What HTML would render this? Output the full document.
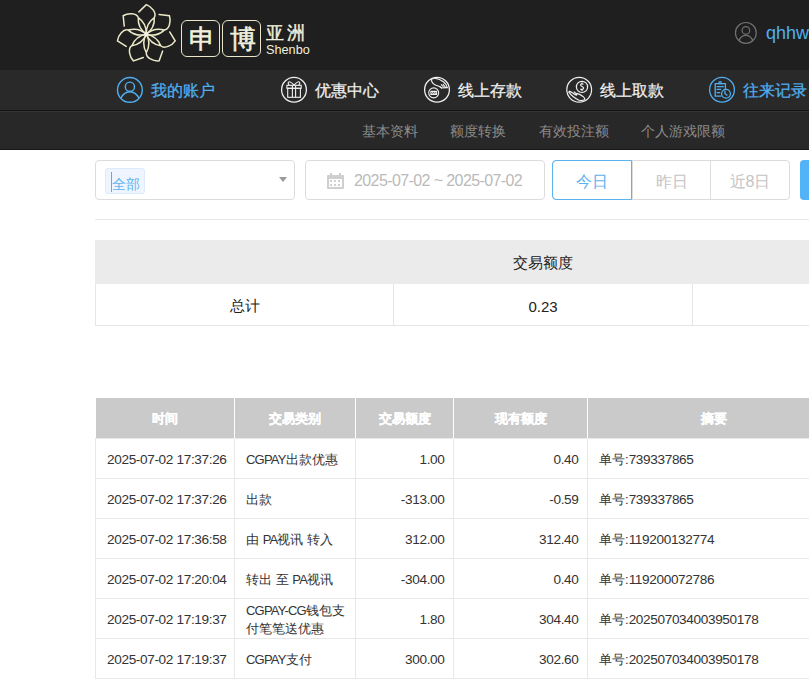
<!DOCTYPE html>
<html><head><meta charset="utf-8">
<style>
*{box-sizing:border-box;margin:0;padding:0}
html,body{width:809px;height:679px;overflow:hidden;background:#fff;font-family:"Liberation Sans",sans-serif;position:relative}
.abs{position:absolute}
#hdr{left:0;top:0;width:809px;height:70px;background:#1f1f1f}
#nav{left:0;top:70px;width:809px;height:40px;background:#292929}
#navline{left:0;top:110px;width:809px;height:1px;background:#131313;border-bottom:1px solid #353535;height:2px}
#sub{left:0;top:112px;width:809px;height:38px;background:#282828;border-bottom:1px solid #171717}
.box{border:1px solid #e9e6c9;border-radius:6px;width:39px;height:37px;top:20px;color:#f2f0dc;font-size:26px;line-height:36px;text-align:center;-webkit-text-stroke:0.6px #f2f0dc;padding-left:3px}
.nv{top:71px;height:40px;line-height:40px;font-size:16px;color:#f0f0f0;white-space:nowrap;-webkit-text-stroke:0.25px currentColor}
.blue{color:#50aff0}
.sn{top:112px;line-height:38px;font-size:14px;color:#8c8c8c;white-space:nowrap}
.inp{top:160px;height:40px;border:1px solid #dcdcdc;border-radius:4px;background:#fff}
.btn{top:0;height:38px;line-height:42px;width:79px;text-align:center;font-size:16px;color:#c4c4c4}
table{border-collapse:collapse;position:absolute}
#sum{left:95px;top:240px;width:896px}
#sum td{height:42px;padding-top:3px;border:1px solid #e6e6e6;text-align:center;font-size:15px;color:#222;width:298.6px}
#sum tr.h td{height:43px;background:#ebebeb;border:1px solid #ebebeb}
#det{left:95px;top:398px;table-layout:fixed;width:744px}
#det th{height:40px;padding-top:2px;background:#cacaca;color:#fff;font-size:13px;font-weight:bold;-webkit-text-stroke:0.3px #fff;border-left:1px solid #fff;border-right:1px solid #fff}
#det th:first-child{border-left:none}
#det td{height:40px;border:1px solid #e8e8e8;font-size:13px;color:#333;padding:3px 0 0 11px;line-height:18px;white-space:nowrap}
.n{letter-spacing:-0.35px;font-size:13.6px}
.c{letter-spacing:-0.8px}
#det td.r{text-align:right;padding-right:8.5px}
</style></head><body>
<div id="hdr" class="abs"></div>
<!-- flower logo -->
<svg class="abs" style="left:114px;top:2px" width="64" height="64" viewBox="-32.3 -32.2 64 64">
 <g fill="none" stroke="#ece9c8" stroke-width="1.5" stroke-linecap="round" stroke-linejoin="miter">
  <path d="M0 0 Q8.70 -6.08 8.02 -16.67 Q-0.67 -10.59 0 0 M8.02 -16.67 C10.6 -21 5.5 -27.6 0 -29.6 L-7.4 -22.3" transform="rotate(0.00)"/><path d="M0 0 Q8.70 -6.08 8.02 -16.67 Q-0.67 -10.59 0 0 M8.02 -16.67 C10.6 -21 5.5 -27.6 0 -29.6 L-7.4 -22.3" transform="rotate(51.43)"/><path d="M0 0 Q8.70 -6.08 8.02 -16.67 Q-0.67 -10.59 0 0 M8.02 -16.67 C10.6 -21 5.5 -27.6 0 -29.6 L-7.4 -22.3" transform="rotate(102.86)"/><path d="M0 0 Q8.70 -6.08 8.02 -16.67 Q-0.67 -10.59 0 0 M8.02 -16.67 C10.6 -21 5.5 -27.6 0 -29.6 L-7.4 -22.3" transform="rotate(154.29)"/><path d="M0 0 Q8.70 -6.08 8.02 -16.67 Q-0.67 -10.59 0 0 M8.02 -16.67 C10.6 -21 5.5 -27.6 0 -29.6 L-7.4 -22.3" transform="rotate(205.71)"/><path d="M0 0 Q8.70 -6.08 8.02 -16.67 Q-0.67 -10.59 0 0 M8.02 -16.67 C10.6 -21 5.5 -27.6 0 -29.6 L-7.4 -22.3" transform="rotate(257.14)"/><path d="M0 0 Q8.70 -6.08 8.02 -16.67 Q-0.67 -10.59 0 0 M8.02 -16.67 C10.6 -21 5.5 -27.6 0 -29.6 L-7.4 -22.3" transform="rotate(308.57)"/>
 </g>
 <circle cx="0" cy="0" r="1.8" fill="#f2f2ee"/>
</svg>
<div class="abs box" style="left:181px">申</div>
<div class="abs box" style="left:222px">博</div>
<div class="abs" style="left:266px;top:22px;font-size:18px;line-height:22px;letter-spacing:3px;color:#f2f0dc;-webkit-text-stroke:0.4px #f2f0dc">亚洲</div>
<div class="abs" style="left:266px;top:42px;font-size:12.7px;line-height:16px;color:#f2f0dc">Shenbo</div>
<svg class="abs" style="left:734px;top:21px" width="24" height="24" viewBox="0 0 24 24"><g fill="none" stroke="#707070" stroke-width="1.2"><circle cx="11.85" cy="11.9" r="10.4"/><circle cx="11.9" cy="9.4" r="3.8"/><path d="M4.7 19.8 C6.5 15.8 9 14.3 11.85 14.3 C14.7 14.3 17.2 15.8 19 19.8"/></g></svg>
<div class="abs blue" style="left:766px;top:21px;font-size:18px;line-height:24px">qhhw</div>

<div id="nav" class="abs"></div>
<div id="navline" class="abs"></div>
<!-- nav items -->
<svg class="abs" style="left:114px;top:74px" width="32" height="32" viewBox="0 0 32 32"><g fill="none" stroke="#50aff0" stroke-width="1.4"><circle cx="15.9" cy="15.9" r="12.4"/><circle cx="15.9" cy="12.7" r="4.6"/><path d="M6.8 24.2 C9 20 12.5 17.8 15.9 17.8 C19.3 17.8 22.8 20 25 24.2"/></g></svg>
<div class="abs nv blue" style="left:151px">我的账户</div>
<svg class="abs" style="left:279px;top:74px" width="32" height="32" viewBox="0 0 32 32"><g fill="none" stroke="#f0f0f0"><circle cx="15" cy="15.8" r="12.4" stroke-width="1.3"/><g stroke-width="1.1"><rect x="7.9" y="11.3" width="14.3" height="3"/><rect x="8.7" y="14.3" width="12.7" height="9"/><path d="M13.4 11.3 V23.3 M16.6 11.3 V23.3"/><path d="M15 11.2 C13 9 11.2 7.4 9.8 7.9 C8.7 8.4 9.2 10.2 10.3 11.2 M15 11.2 C17 9 18.8 7.4 20.2 7.9 C21.3 8.4 20.8 10.2 19.7 11.2"/></g></g></svg>
<div class="abs nv" style="left:315px">优惠中心</div>
<svg class="abs" style="left:421px;top:74px" width="32" height="32" viewBox="0 0 32 32"><g fill="none" stroke="#f0f0f0" stroke-linejoin="round" stroke-linecap="round"><circle cx="16" cy="15.8" r="12.4" stroke-width="1.3"/><g stroke-width="1.1"><circle cx="12.7" cy="18.85" r="5"/><path d="M9.9 17.4 H15.6 V20.4 H9.9 Z"/><path d="M10.6 20.2 L11.6 17.8 L12.7 20.2 L13.8 17.8 L14.9 20.2" stroke-width="0.8"/><path d="M10.1 5.6 L13.7 4.1 C17 4.6 20.5 6.2 22.8 8 C24.6 9.5 25.8 11.6 26.3 13.6"/><path d="M10.4 6.2 C10.8 8.4 12.4 10.4 15.4 11.4 C17 11.9 18.6 12.3 20.6 14"/><path d="M20.3 10.6 L22.2 12.6 M22.2 10.2 L24.6 13.6 M18.9 12.6 L20.6 14 L26.3 13.6"/></g></g></svg>
<div class="abs nv" style="left:458px">线上存款</div>
<svg class="abs" style="left:564px;top:74px" width="32" height="32" viewBox="0 0 32 32"><g fill="none" stroke="#f0f0f0" stroke-width="1.2" stroke-linejoin="round"><circle cx="15.2" cy="15.8" r="12.4"/><circle cx="18" cy="12.9" r="5.6"/><path d="M19.4 10.4 C18.8 9.6 16.6 9.7 16.6 11.1 C16.6 12.6 19.6 12.4 19.6 14.1 C19.6 15.6 17.2 15.8 16.4 14.8 M18 8.6 V10.2 M18 15.2 V17"/><path d="M4.4 17.6 C6.5 20.5 9.5 23.6 15 26.2 C17 26.8 19.2 26.6 21 25.6 M5 17.2 C7 17.4 9 19.2 11.4 20.8 C12.6 21.6 13.2 21 12.2 19.8 L9.8 17.6 M12.6 19.4 C14.5 19.8 17 21 19 22.4 C20.2 23.4 20.8 24.4 21 25.6"/></g></svg>
<div class="abs nv" style="left:600px">线上取款</div>
<svg class="abs" style="left:706px;top:74px" width="32" height="32" viewBox="0 0 32 32"><g fill="none" stroke="#50aff0" stroke-width="1.3" stroke-linejoin="round"><circle cx="16" cy="15.8" r="12.4"/><path d="M15.4 22.2 H9.2 V9.6 H19.4 V15.4"/><path d="M11.4 9.6 H16.8 M12.8 9.4 C12.8 7 15.4 7 15.4 9.4"/><path d="M10.6 12.7 H17.8 M10.6 15.4 H15.2 M10.6 18.6 H14.2"/><circle cx="20" cy="19.8" r="4.4"/><path d="M18.9 16.4 V19.6 L21.4 21.6"/></g></svg>
<div class="abs nv blue" style="left:743px">往来记录</div>

<div id="sub" class="abs"></div>
<div class="abs sn" style="left:362px">基本资料</div>
<div class="abs sn" style="left:450px">额度转换</div>
<div class="abs sn" style="left:539px">有效投注额</div>
<div class="abs sn" style="left:641px">个人游戏限额</div>

<!-- filters -->
<div class="abs inp" style="left:95px;width:200px">
 <div class="abs" style="left:9px;top:7px;width:40px;height:26px;background:#eef5fe;border:1px solid #dceafb;border-radius:3px"></div>
 <div class="abs" style="left:15px;top:11px;width:1px;height:20px;background:#55aef2"></div>
 <div class="abs" style="left:15.5px;top:10px;font-size:14px;line-height:26px;color:#5eb3f2">全部</div>
 <div class="abs" style="left:183px;top:16px;width:0;height:0;border-left:4px solid transparent;border-right:4px solid transparent;border-top:5.5px solid #999"></div>
</div>
<div class="abs inp" style="left:305px;width:240px">
 <svg class="abs" style="left:21px;top:12px" width="17" height="16" viewBox="0 0 17 16"><g fill="#cfcfcf"><rect x="0" y="2" width="17" height="14" rx="1"/><rect x="3" y="0" width="2" height="4"/><rect x="12" y="0" width="2" height="4"/></g><g fill="#fff"><rect x="2" y="6" width="13" height="8"/></g><g fill="#cfcfcf"><rect x="3" y="7" width="2" height="2"/><rect x="7" y="7" width="2" height="2"/><rect x="11" y="7" width="2" height="2"/><rect x="3" y="11" width="2" height="2"/><rect x="7" y="11" width="2" height="2"/><rect x="11" y="11" width="2" height="2"/></g></svg>
 <div class="abs" style="left:48px;top:1px;line-height:38px;font-size:16px;color:#bababa;letter-spacing:-0.6px;white-space:nowrap">2025-07-02 ~ 2025-07-02</div>
</div>
<div class="abs inp" style="left:552px;width:238px;overflow:hidden">
 <div class="abs btn" style="left:79px;border-left:1px solid #dcdcdc">昨日</div>
 <div class="abs btn" style="left:157px;border-left:1px solid #dcdcdc">近8日</div>
</div>
<div class="abs" style="left:552px;top:160px;width:80px;height:40px;border:1px solid #5ab2ef;border-radius:4px 0 0 4px;line-height:42px;text-align:center;font-size:16px;color:#5ab2ef">今日</div>
<div class="abs" style="left:800px;top:160px;width:60px;height:40px;background:#53b3f8;border-radius:4px"></div>
<div class="abs" style="left:95px;top:219px;width:714px;height:1px;background:#e6e6e6"></div>

<!-- summary -->
<table id="sum">
 <tr class="h"><td></td><td>交易额度</td><td></td></tr>
 <tr><td>总计</td><td>0.23</td><td></td></tr>
</table>

<!-- details -->
<table id="det">
 <tr><th style="width:139px">时间</th><th style="width:121px">交易类别</th><th style="width:98px">交易额度</th><th style="width:134px">现有额度</th><th style="width:252px">摘要</th></tr>
 <tr><td><span class="n">2025-07-02 17:37:26</span></td><td><span class="c">CGPAY</span>出款优惠</td><td class="r"><span class="n">1.00</span></td><td class="r"><span class="n">0.40</span></td><td>单号:<span class="n">739337865</span></td></tr>
 <tr><td><span class="n">2025-07-02 17:37:26</span></td><td>出款</td><td class="r"><span class="n">-313.00</span></td><td class="r"><span class="n">-0.59</span></td><td>单号:<span class="n">739337865</span></td></tr>
 <tr><td><span class="n">2025-07-02 17:36:58</span></td><td>由 <span class="c">PA</span>视讯 转入</td><td class="r"><span class="n">312.00</span></td><td class="r"><span class="n">312.40</span></td><td>单号:<span class="n">119200132774</span></td></tr>
 <tr><td><span class="n">2025-07-02 17:20:04</span></td><td>转出 至 <span class="c">PA</span>视讯</td><td class="r"><span class="n">-304.00</span></td><td class="r"><span class="n">0.40</span></td><td>单号:<span class="n">119200072786</span></td></tr>
 <tr><td><span class="n">2025-07-02 17:19:37</span></td><td><span class="c">CGPAY-CG</span>钱包支<br>付笔笔送优惠</td><td class="r"><span class="n">1.80</span></td><td class="r"><span class="n">304.40</span></td><td>单号:<span class="n">202507034003950178</span></td></tr>
 <tr><td><span class="n">2025-07-02 17:19:37</span></td><td><span class="c">CGPAY</span>支付</td><td class="r"><span class="n">300.00</span></td><td class="r"><span class="n">302.60</span></td><td>单号:<span class="n">202507034003950178</span></td></tr>
</table>
</body></html>
